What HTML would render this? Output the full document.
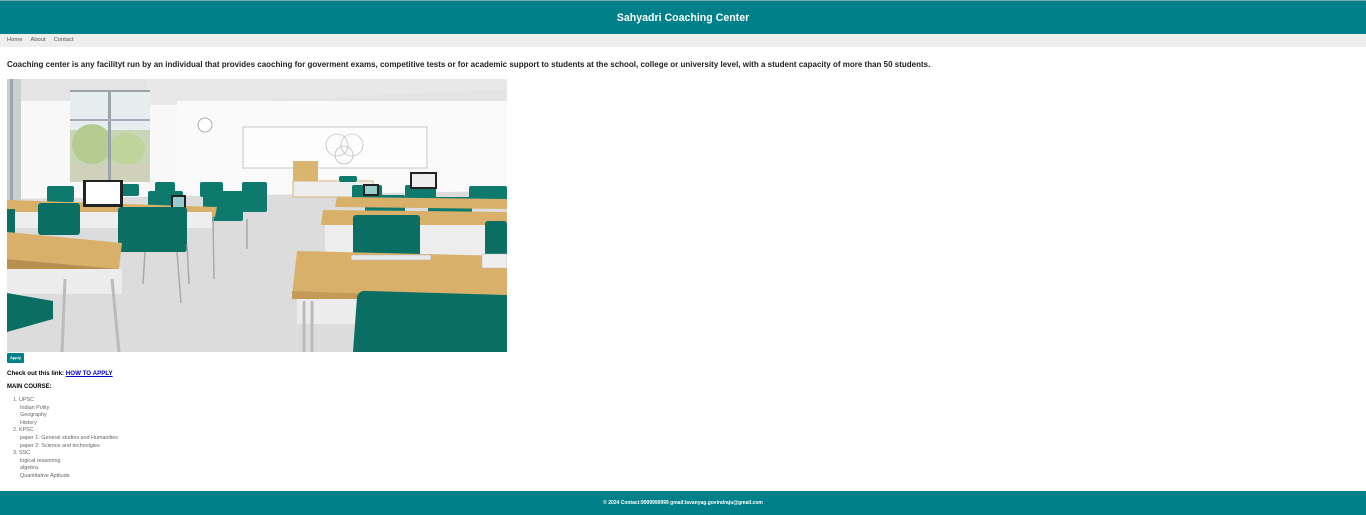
<!DOCTYPE html>
<html><head><meta charset="utf-8"><style>
*{margin:0;padding:0;box-sizing:border-box}
body{width:1366px;height:515px;position:relative;background:#fff;font-family:"Liberation Sans",Arial,sans-serif;overflow:hidden}
header{position:absolute;left:0;top:0;width:1366px;height:34px;background:#008088;border-top:1px solid #7aa;color:#fff;font-weight:bold;font-size:10.6px;text-align:center;line-height:34px}
nav{position:absolute;left:0;top:34px;width:1366px;height:13px;background:#eeeeee;font-size:5.8px;color:#555;line-height:13px;padding-left:7px}
nav span{margin-right:8px}
.intro{position:absolute;left:7px;top:60px;font-size:8px;font-weight:bold;color:#222;white-space:nowrap}
svg.pic{position:absolute;left:7px;top:79px}
.btn{position:absolute;left:7px;top:353px;width:17px;height:10px;background:#008088;color:#fff;font-size:4px;font-weight:bold;text-align:center;line-height:10px;border-radius:1px}
.chk{position:absolute;left:7px;top:370px;font-size:6.2px;font-weight:bold;color:#000}
.chk a{color:#00c;text-decoration:underline}
.mc{position:absolute;left:7px;top:384px;font-size:6px;font-weight:bold;color:#000}
ol{position:absolute;left:13px;top:397px;font-size:5.4px;color:#666;list-style:none;line-height:7.6px}
ol .s{padding-left:7px}
footer{position:absolute;left:0;top:491px;width:1366px;height:24px;background:#008088;color:#fff;font-size:5px;font-weight:bold;text-align:center;line-height:24px}
</style></head><body>
<header>Sahyadri Coaching Center</header>
<nav><span>Home</span><span>About</span><span>Contact</span></nav>
<div class="intro">Coaching center is any facilityt run by an individual that provides caoching for goverment exams, competitive tests or for academic support to students at the school, college or university level, with a student capacity of more than 50 students.</div>
<svg class="pic" width="500" height="273" viewBox="0 0 500 273">
<rect width="500" height="273" fill="#f8f8f8"/>
<rect x="0" y="0" width="500" height="22" fill="#e4e4e4"/>
<polygon points="140,0 500,0 500,10 170,26 140,26" fill="#e8e8e8"/>
<rect x="170" y="22" width="330" height="100" fill="#fafafa"/>
<polygon points="0,120 500,112 500,273 0,273" fill="#dcdcdc"/>
<rect x="0" y="0" width="14" height="125" fill="#c9ced1"/>
<rect x="3" y="0" width="3" height="125" fill="#9aa6ab"/>
<rect x="63" y="11" width="80" height="92" fill="#c8d6b8"/>
<rect x="63" y="11" width="80" height="40" fill="#e6edee"/>
<ellipse cx="85" cy="65" rx="20" ry="20" fill="#b5cc90"/>
<ellipse cx="120" cy="70" rx="18" ry="16" fill="#bfd49a"/>
<rect x="63" y="85" width="80" height="18" fill="#cfd1bb"/>
<rect x="101" y="11" width="3" height="92" fill="#9aa3a8"/>
<rect x="63" y="11" width="80" height="2" fill="#9aa3a8"/>
<rect x="63" y="40" width="80" height="2" fill="#aab"/>
<rect x="236" y="48" width="184" height="41" fill="#fdfdfd" stroke="#c8c8c8" stroke-width="1"/>
<circle cx="330" cy="66" r="11" fill="none" stroke="#aaa" stroke-width=".6"/>
<circle cx="345" cy="66" r="11" fill="none" stroke="#aaa" stroke-width=".6"/>
<circle cx="337" cy="76" r="9" fill="none" stroke="#aaa" stroke-width=".6"/>
<circle cx="198" cy="46" r="7" fill="#fff" stroke="#aaa" stroke-width="1"/>
<rect x="286" y="82" width="25" height="33" fill="#d9b56f"/>
<rect x="286" y="102" width="80" height="16" fill="#eee" stroke="#d7b878" stroke-width="1"/>
<g fill="#0d7a6d">
<rect x="40" y="107" width="27" height="16" rx="2"/>
<rect x="110" y="105" width="22" height="12" rx="2"/>
<rect x="148" y="103" width="20" height="15" rx="2"/>
<rect x="193" y="103" width="23" height="15" rx="2"/>
<rect x="235" y="103" width="25" height="30" rx="2"/>
<rect x="332" y="97" width="18" height="6" rx="2"/>
<rect x="345" y="106" width="30" height="14" rx="2"/>
<rect x="398" y="106" width="31" height="15" rx="2"/>
<rect x="462" y="107" width="38" height="15" rx="2"/>
<rect x="141" y="112" width="35" height="20" rx="2"/>
<rect x="196" y="112" width="40" height="30" rx="2"/>
<rect x="358" y="116" width="40" height="20" rx="2"/>
<rect x="421" y="118" width="44" height="22" rx="2"/>
</g>
<polygon points="0,121 210,128 208,138 0,133" fill="#d8b06a"/>
<rect x="0" y="133" width="205" height="16" fill="#eee"/>
<polygon points="330,118 500,120 500,130 328,128" fill="#d8b06a"/>
<rect x="76" y="101" width="40" height="27" fill="#222"/><rect x="79" y="103" width="34" height="22" fill="#fff"/>
<rect x="164" y="116" width="15" height="15" fill="#222"/><rect x="166" y="118" width="11" height="11" fill="#9cc"/>
<rect x="403" y="93" width="27" height="17" fill="#222"/><rect x="405" y="95" width="23" height="13" fill="#eee"/>
<rect x="356" y="105" width="16" height="12" fill="#222"/><rect x="358" y="107" width="12" height="8" fill="#9cc"/>
<polygon points="316,131 500,133 500,149 314,146" fill="#d8b06a"/>
<rect x="318" y="146" width="160" height="30" fill="#ededed"/>
<g fill="#0b6e63">
<rect x="31" y="124" width="42" height="32" rx="3"/>
<rect x="111" y="128" width="69" height="45" rx="3"/>
<rect x="346" y="136" width="67" height="42" rx="3"/>
<rect x="478" y="142" width="22" height="40" rx="3"/>
<rect x="0" y="130" width="8" height="30"/>
</g>
<g stroke="#aaa" stroke-width="1.5">
<line x1="138" y1="173" x2="136" y2="205"/><line x1="170" y1="173" x2="174" y2="224"/><line x1="180" y1="165" x2="182" y2="205"/>
<line x1="206" y1="138" x2="207" y2="200"/><line x1="240" y1="140" x2="240" y2="170"/>
</g>
<polygon points="0,153 115,164 112,190 0,180" fill="#d8b06a"/>
<polygon points="0,180 112,190 112,200 0,190" fill="#b98f4f"/>
<rect x="0" y="190" width="115" height="25" fill="#ececec"/>
<g stroke="#bbb" stroke-width="3"><line x1="58" y1="200" x2="55" y2="273"/><line x1="105" y1="200" x2="112" y2="273"/></g>
<polygon points="0,214 46,222 46,240 0,253" fill="#0b6e63"/>
<polygon points="290,172 500,177 500,223 285,217" fill="#d8b06a"/>
<polygon points="285,212 500,220 500,227 285,220" fill="#c49a57"/>
<rect x="290" y="220" width="60" height="25" fill="#ececec"/>
<g stroke="#bbb" stroke-width="3"><line x1="297" y1="222" x2="297" y2="273"/><line x1="305" y1="222" x2="305" y2="273"/></g>
<rect x="344" y="176" width="80" height="5" rx="2" fill="#e8e8e8" stroke="#bbb" stroke-width=".5"/>
<rect x="475" y="175" width="25" height="14" fill="#eee" stroke="#bbb" stroke-width=".5"/>
<path d="M350,218 Q352,211 360,212 L500,216 L500,273 L346,273 Z" fill="#0b6e63"/>
</svg>
<div class="btn">Apply</div>
<div class="chk">Check out this link: <a>HOW TO APPLY</a></div>
<div class="mc">MAIN COURSE:</div>
<ol>
<li>1. UPSC</li><li class="s">Indian Polity</li><li class="s">Geography</li><li class="s">History</li>
<li>2. KPSC</li><li class="s">paper 1: General studies and Humanities</li><li class="s">paper 2: Science and technolgies</li>
<li>3. SSC</li><li class="s">logical reasoning</li><li class="s">algebra</li><li class="s">Quantitative Aptitude</li>
</ol>
<footer>© 2024 Contact:9999999999 gmail:lavanyag.govindraju@gmail.com</footer>
</body></html>
